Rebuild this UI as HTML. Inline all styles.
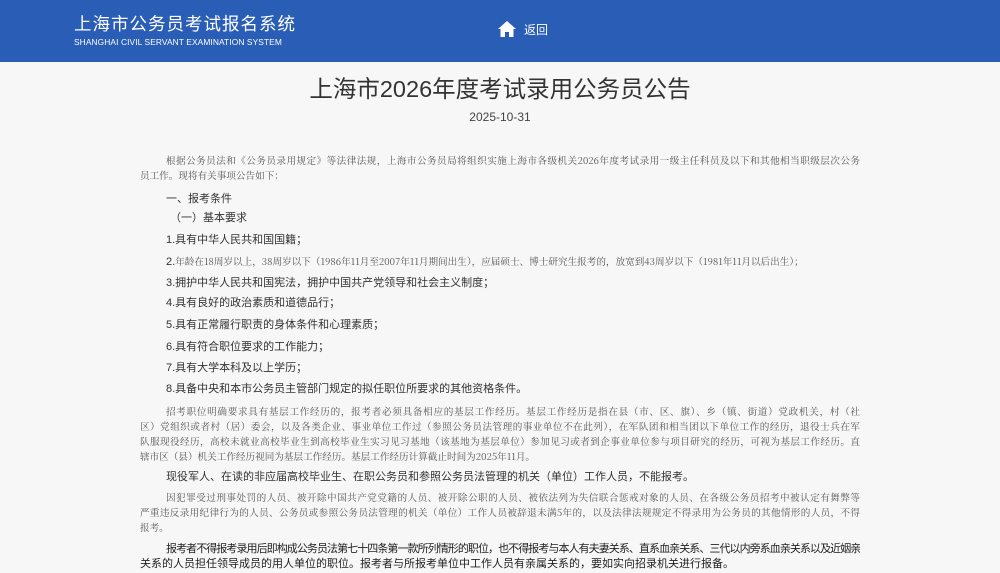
<!DOCTYPE html>
<html><head><meta charset="utf-8"><style>
*{margin:0;padding:0;box-sizing:border-box}
body{width:1000px;height:573px;overflow:hidden;background:#f7f7f7;position:relative;font-family:"Liberation Sans","Noto Sans CJK SC",sans-serif;color:#333}
.hd{position:absolute;left:0;top:0;width:1000px;height:62px;background:#2a5db5}
.t1{position:absolute;left:74px;top:13px;font-size:17.5px;color:#fff;letter-spacing:1px;line-height:22px}
.t2{position:absolute;left:74px;top:37px;font-size:8.4px;color:#fff;line-height:10px;letter-spacing:.1px}
.home{position:absolute;left:498px;top:21px}
.back{position:absolute;left:524px;top:22px;font-size:12px;color:#fff;line-height:16px}
.l{position:absolute;left:140px;width:720px;white-space:nowrap;overflow:hidden}
.s{font-family:"Noto Serif CJK SC","Liberation Serif",serif;font-size:9.6px;color:#555;line-height:13px;text-align:justify;text-align-last:justify}
.n{font-size:11px;color:#333;line-height:14px}
.b{font-size:11px;color:#222;line-height:15px;text-align:justify;text-align-last:justify}
</style></head><body>
<div class="hd">
<div class="t1">上海市公务员考试报名系统</div>
<div class="t2">SHANGHAI CIVIL SERVANT EXAMINATION SYSTEM</div>
<svg class="home" width="18" height="16" viewBox="0 0 18 16"><path d="M9 0L0 8h2.5v8h4.5v-5h4v5h4.5V8H18z" fill="#fff"/></svg>
<div class="back">返回</div>
</div>
<div style="position:absolute;left:0;width:1000px;top:74px;text-align:center;font-size:23.5px;color:#333;line-height:30px">上海市2026年度考试录用公务员公告</div>
<div style="position:absolute;left:0;width:1000px;top:109px;text-align:center;font-size:12px;color:#444;line-height:16px">2025-10-31</div>

<div class="l s" style="top:154px;padding-left:26px">根据公务员法和《公务员录用规定》等法律法规，上海市公务员局将组织实施上海市各级机关2026年度考试录用一级主任科员及以下和其他相当职级层次公务</div>
<div class="l s" style="top:169px;text-align-last:left">员工作。现将有关事项公告如下：</div>
<div class="l n" style="top:192px;left:166px">一、报考条件</div>
<div class="l n" style="top:211px;left:170px">（一）基本要求</div>
<div class="l n" style="top:233px;left:166px">1.具有中华人民共和国国籍；</div>
<div class="l n" style="top:255px;left:166px">2.<span class="s" style="font-size:9.6px">年龄在18周岁以上，38周岁以下（1986年11月至2007年11月期间出生），应届硕士、博士研究生报考的，放宽到43周岁以下（1981年11月以后出生）；</span></div>
<div class="l n" style="top:276px;left:166px">3.拥护中华人民共和国宪法，拥护中国共产党领导和社会主义制度；</div>
<div class="l n" style="top:296px;left:166px">4.具有良好的政治素质和道德品行；</div>
<div class="l n" style="top:318px;left:166px">5.具有正常履行职责的身体条件和心理素质；</div>
<div class="l n" style="top:340px;left:166px">6.具有符合职位要求的工作能力；</div>
<div class="l n" style="top:361px;left:166px">7.具有大学本科及以上学历；</div>
<div class="l n" style="top:382px;left:166px">8.具备中央和本市公务员主管部门规定的拟任职位所要求的其他资格条件。</div>
<div class="l s" style="top:405px;padding-left:26px">招考职位明确要求具有基层工作经历的，报考者必须具备相应的基层工作经历。基层工作经历是指在县（市、区、旗）、乡（镇、街道）党政机关，村（社</div>
<div class="l s" style="top:420px">区）党组织或者村（居）委会，以及各类企业、事业单位工作过（参照公务员法管理的事业单位不在此列），在军队团和相当团以下单位工作的经历，退役士兵在军</div>
<div class="l s" style="top:435px">队服现役经历，高校未就业高校毕业生到高校毕业生实习见习基地（该基地为基层单位）参加见习或者到企事业单位参与项目研究的经历，可视为基层工作经历。直</div>
<div class="l s" style="top:450px;text-align-last:left">辖市区（县）机关工作经历视同为基层工作经历。基层工作经历计算截止时间为2025年11月。</div>
<div class="l n" style="top:470px;left:166px">现役军人、在读的非应届高校毕业生、在职公务员和参照公务员法管理的机关（单位）工作人员，不能报考。</div>
<div class="l s" style="top:491px;padding-left:26px">因犯罪受过刑事处罚的人员、被开除中国共产党党籍的人员、被开除公职的人员、被依法列为失信联合惩戒对象的人员、在各级公务员招考中被认定有舞弊等</div>
<div class="l s" style="top:506px">严重违反录用纪律行为的人员、公务员或参照公务员法管理的机关（单位）工作人员被辞退未满5年的，以及法律法规规定不得录用为公务员的其他情形的人员，不得</div>
<div class="l s" style="top:521px;text-align-last:left">报考。</div>
<div class="l b" style="top:542px;padding-left:26px;letter-spacing:-1.3px">报考者不得报考录用后即构成公务员法第七十四条第一款所列情形的职位，也不得报考与本人有夫妻关系、直系血亲关系、三代以内旁系血亲关系以及近姻亲</div>
<div class="l b" style="top:557px;text-align-last:left">关系的人员担任领导成员的用人单位的职位。报考者与所报考单位中工作人员有亲属关系的，要如实向招录机关进行报备。</div>
</body></html>
